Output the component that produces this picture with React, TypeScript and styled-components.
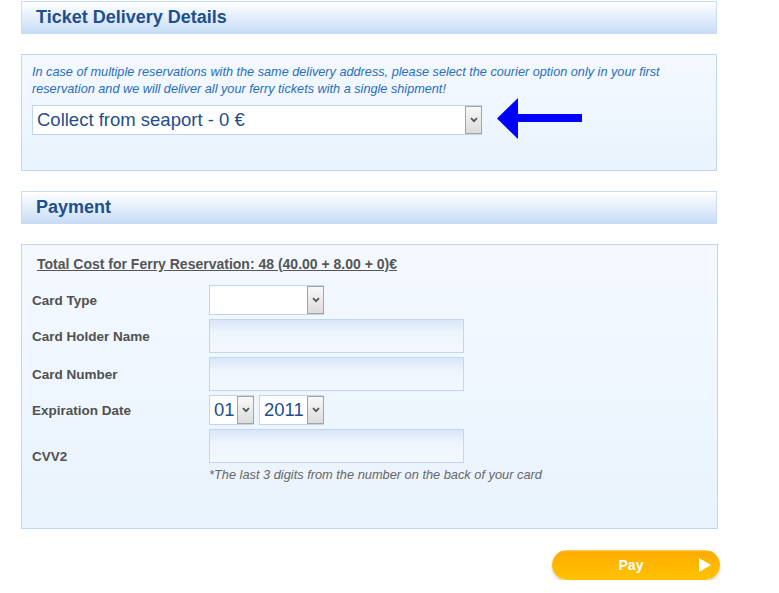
import React from "react";
import styled, { createGlobalStyle } from "styled-components";

const GlobalStyle = createGlobalStyle`
  html, body { margin: 0; padding: 0; background: #ffffff; }
  body { font-family: "Liberation Sans", Arial, sans-serif; }
  * { box-sizing: border-box; }
`;

const Page = styled.div`
  width: 718px;
  padding: 1px 0 0 21px;
  display: flex;
  flex-direction: column;
`;

const SectionHeader = styled.div<{ $gap?: number }>`
  height: 33px;
  margin-top: ${(p) => p.$gap ?? 0}px;
  margin-right: 1px;
  border: 1px solid #c8dcf4;
  background: linear-gradient(#ffffff 0%, #e6f0fb 45%, #c7dcf6 100%);
  padding-left: 14px;
  font-weight: bold;
  font-size: 18px;
  line-height: 30px;
  color: #1e4f8f;
`;

const Panel = styled.div<{ $pt: number; $pb: number; $wide?: boolean }>`
  margin-top: 20px;
  margin-right: ${(p) => (p.$wide ? 0 : 1)}px;
  border: 1px solid #bfd7f4;
  background: linear-gradient(#f4f9ff, #e9f3fd);
  padding: ${(p) => p.$pt}px 10px ${(p) => p.$pb}px 10px;
  display: flex;
  flex-direction: column;
`;

const Notice = styled.p`
  margin: 0;
  font-style: italic;
  font-size: 12.7px;
  line-height: 17px;
  color: #276dc0;
  white-space: nowrap;
`;

const SelectRow = styled.div`
  margin-top: 7px;
  height: 30px;
  display: flex;
  align-items: center;
  gap: 15px;
`;

const SelectBox = styled.div<{ $w: number }>`
  width: ${(p) => p.$w}px;
  height: 30px;
  border: 1px solid #bfd6f3;
  background: #ffffff;
  display: flex;
  align-items: stretch;
  flex: none;
`;

const SelectValue = styled.span`
  flex: 1;
  padding-left: 4px;
  font-size: 18.5px;
  line-height: 28px;
  color: #1f4e8c;
  white-space: nowrap;
  overflow: hidden;
`;

const SelectButton = styled.span`
  width: 17px;
  margin: 0 -1px 0 0;
  border: 1px solid #a4a4a4;
  background: linear-gradient(#f8f8f8, #dcdcdc);
  display: flex;
  align-items: center;
  justify-content: center;
`;

const TotalLine = styled.div`
  margin-left: 5px;
  font-weight: bold;
  font-size: 14px;
  line-height: 18px;
  color: #555555;
  text-decoration: underline;
`;

const Form = styled.div`
  margin-top: 12px;
  display: grid;
  grid-template-columns: 177px 1fr;
  row-gap: 4px;
  align-items: center;
`;

const Label = styled.div`
  font-weight: bold;
  font-size: 13.5px;
  color: #505050;
`;

const Field = styled.div`
  display: flex;
  flex-direction: column;
  align-items: flex-start;
`;

const FieldGroup = styled.div`
  display: flex;
  gap: 5px;
`;

const TextInput = styled.input`
  width: 255px;
  height: 34px;
  border: 1px solid #bfd7f4;
  background: linear-gradient(#d8e6f7 0%, #eef5fd 40%, #f4f8fe 100%);
  outline: none;
  padding: 0 4px;
  font-family: inherit;
  font-size: 13px;
`;

const Hint = styled.div`
  margin-top: 4px;
  font-style: italic;
  font-size: 12.8px;
  line-height: 16px;
  color: #666666;
  white-space: nowrap;
`;

const Footer = styled.div`
  margin-top: 21px;
  display: flex;
  justify-content: flex-end;
  margin-right: -2px;
`;

const PayButton = styled.button`
  width: 168px;
  height: 30px;
  border: none;
  border-radius: 15px;
  padding: 0 9px 0 11px;
  background: linear-gradient(#ffd26a 0px, #ffab00 2px, #ffb600 45%, #ffc100 100%);
  box-shadow: 0 3px 3px rgba(0, 0, 0, 0.14);
  display: flex;
  align-items: center;
  cursor: pointer;
`;

const PayLabel = styled.span`
  flex: 1;
  text-align: center;
  font-family: "Liberation Sans", Arial, sans-serif;
  font-weight: bold;
  font-size: 14px;
  color: #ffffff;
`;

const ArrowSvg = styled.svg`
  flex: none;
  margin: -7px 0 -5px 0;
`;

const Chevron = () => (
  <svg width="8" height="6" viewBox="0 0 8 6">
    <path d="M1 1.2 L4 4.2 L7 1.2" fill="none" stroke="#555" strokeWidth="1.8" />
  </svg>
);

const Select = ({ width, value }: { width: number; value: string }) => (
  <SelectBox $w={width}>
    <SelectValue>{value}</SelectValue>
    <SelectButton>
      <Chevron />
    </SelectButton>
  </SelectBox>
);

const BlueArrow = () => (
  <ArrowSvg width="86" height="42" viewBox="0 0 86 42">
    <polygon points="0,20.5 21,0 21,16 85,16 85,24 21,24 21,41" fill="#0000ff" />
  </ArrowSvg>
);

const PlayIcon = () => (
  <svg width="12" height="14" viewBox="0 0 12 14">
    <polygon points="0,0 12,7 0,14" fill="#ffffff" />
  </svg>
);

export default function App() {
  return (
    <>
      <GlobalStyle />
      <Page>
        <SectionHeader>Ticket Delivery Details</SectionHeader>
        <Panel $pt={9} $pb={35}>
          <Notice>
            In case of multiple reservations with the same delivery address, please select the courier option only in your first
            <br />
            reservation and we will deliver all your ferry tickets with a single shipment!
          </Notice>
          <SelectRow>
            <Select width={450} value="Collect from seaport - 0 €" />
            <BlueArrow />
          </SelectRow>
        </Panel>

        <SectionHeader $gap={20}>Payment</SectionHeader>
        <Panel $pt={10} $pb={45} $wide>
          <TotalLine>Total Cost for Ferry Reservation: 48 (40.00 + 8.00 + 0)€</TotalLine>
          <Form>
            <Label>Card Type</Label>
            <Field>
              <Select width={115} value="" />
            </Field>
            <Label>Card Holder Name</Label>
            <Field>
              <TextInput />
            </Field>
            <Label>Card Number</Label>
            <Field>
              <TextInput />
            </Field>
            <Label>Expiration Date</Label>
            <Field>
              <FieldGroup>
                <Select width={45} value="01" />
                <Select width={65} value="2011" />
              </FieldGroup>
            </Field>
            <Label>CVV2</Label>
            <Field>
              <TextInput />
              <Hint>*The last 3 digits from the number on the back of your card</Hint>
            </Field>
          </Form>
        </Panel>
        <Footer>
          <PayButton>
            <PayLabel>Pay</PayLabel>
            <PlayIcon />
          </PayButton>
        </Footer>
      </Page>
    </>
  );
}
